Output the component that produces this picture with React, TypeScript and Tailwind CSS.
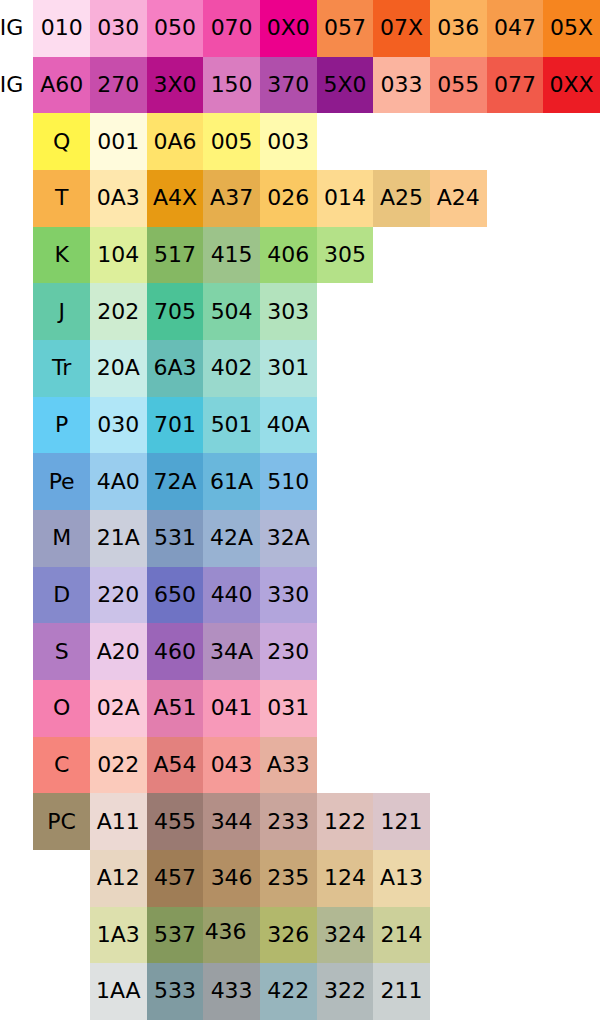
import React from 'react'

type Cell = [string, string]

interface Row {
  lead?: string
  cells: (Cell | null)[]
}

const rows: Row[] = [
  {
    lead: 'IG',
    cells: [
      ['010', '#fddcef'], ['030', '#f9b0d9'], ['050', '#f57fc3'], ['070', '#f14ea9'], ['0X0', '#ec008c'],
      ['057', '#f68a4b'], ['07X', '#f36021'], ['036', '#fbb25f'], ['047', '#f79c4b'], ['05X', '#f6851f'],
    ],
  },
  {
    lead: 'IG',
    cells: [
      ['A60', '#e462b7'], ['270', '#c74dab'], ['3X0', '#b6128a'], ['150', '#da7cc0'], ['370', '#b04fab'],
      ['5X0', '#8e1b8e'], ['033', '#fbb49f'], ['055', '#f78571'], ['077', '#f15a4a'], ['0XX', '#ec1c24'],
    ],
  },
  { cells: [['Q', '#fff44a'], ['001', '#fffbdc'], ['0A6', '#ffe36a'], ['005', '#fff478'], ['003', '#fffaad']] },
  {
    cells: [
      ['T', '#f8b24b'], ['0A3', '#fee7ad'], ['A4X', '#e79a13'], ['A37', '#e6ae4d'], ['026', '#fac862'],
      ['014', '#fdda8f'], ['A25', '#e9c47e'], ['A24', '#fbc98e'],
    ],
  },
  { cells: [['K', '#82cf68'], ['104', '#ddef9b'], ['517', '#85b863'], ['415', '#9cc38a'], ['406', '#9ad673'], ['305', '#b4e188']] },
  { cells: [['J', '#64c9a7'], ['202', '#ceecd0'], ['705', '#4bc296'], ['504', '#80d3a7'], ['303', '#b3e3bd']] },
  { cells: [['Tr', '#66cdd1'], ['20A', '#c8ede7'], ['6A3', '#68bdb6'], ['402', '#99d9cc'], ['301', '#b2e4dd']] },
  { cells: [['P', '#64cdf5'], ['030', '#b0e6f7'], ['701', '#4bc4dc'], ['501', '#7fd3da'], ['40A', '#97dde8']] },
  { cells: [['Pe', '#6aa8df'], ['4A0', '#99cdee'], ['72A', '#50a5d2'], ['61A', '#69b7dc'], ['510', '#7fbde8']] },
  { cells: [['M', '#9a9fc2'], ['21A', '#cbcfdc'], ['531', '#819bc0'], ['42A', '#98b2d2'], ['32A', '#b1b8d6']] },
  { cells: [['D', '#8589cc'], ['220', '#cbc2e8'], ['650', '#6f73c4'], ['440', '#9a8bcd'], ['330', '#b2a5dc']] },
  { cells: [['S', '#b37cc4'], ['A20', '#ebc9e8'], ['460', '#9b65b8'], ['34A', '#b28fc0'], ['230', '#caa9dc']] },
  { cells: [['O', '#f580b0'], ['02A', '#fbc9d9'], ['A51', '#e27eae'], ['041', '#f799b9'], ['031', '#f9b1c4']] },
  { cells: [['C', '#f6857c'], ['022', '#fbcabb'], ['A54', '#e3817e'], ['043', '#f59b98'], ['A33', '#e6b09f']] },
  {
    cells: [
      ['PC', '#9e8c69'], ['A11', '#ecd9d3'], ['455', '#9a7a72'], ['344', '#b38f87'], ['233', '#c9a59c'],
      ['122', '#dfc1bb'], ['121', '#dbc5ca'],
    ],
  },
  {
    cells: [
      null, ['A12', '#e8d6c1'], ['457', '#9f7d56'], ['346', '#b38f64'], ['235', '#c8a778'],
      ['124', '#dec190'], ['A13', '#ecd7a9'],
    ],
  },
  {
    cells: [
      null, ['1A3', '#dde0ad'], ['537', '#84995c'], ['436', '#9aa06b'], ['326', '#b2b86c'],
      ['324', '#b1b893'], ['214', '#ccd09a'],
    ],
  },
  {
    cells: [
      null, ['1AA', '#dee1e1'], ['533', '#7f9ba2'], ['433', '#9a9fa3'], ['422', '#97b5bd'],
      ['322', '#b2bbbc'], ['211', '#cbd1d1'],
    ],
  },
]

export default function App() {
  return (
    <div
      className="grid w-[600px] h-[1020px] bg-white text-black text-[22px] leading-none grid-cols-[33.333px_repeat(10,56.667px)] auto-rows-[56.667px]"
      style={{ fontFamily: 'Verdana, "DejaVu Sans", sans-serif' }}
    >
      {rows.map((row, r) => (
        <React.Fragment key={r}>
          <div className="flex items-center justify-end pr-[10px] overflow-visible whitespace-nowrap">
            {row.lead}
          </div>
          {Array.from({ length: 10 }).map((_, c) => {
            const cell = row.cells[c]
            if (!cell) return <div key={c} />
            const [label, color] = cell
            return (
              <div key={c} className="flex items-center justify-center" style={{ backgroundColor: color }}>
                {label === '436' ? <span className="-translate-x-[6px] -translate-y-[3px]">{label}</span> : label}
              </div>
            )
          })}
        </React.Fragment>
      ))}
    </div>
  )
}
